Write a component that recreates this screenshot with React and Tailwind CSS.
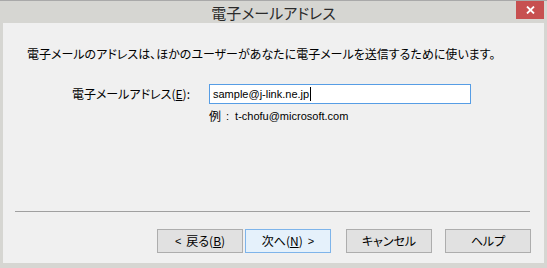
import React from "react";

const jp = { fontFamily: '"Noto Sans CJK JP", "Noto Sans", sans-serif' };
const lat = "font-['Liberation_Sans',sans-serif]";

function Btn({ children, primary, className = "" }) {
  return (
    <div
      className={
        "w-[86px] h-[24px] flex items-center justify-center text-[12px] leading-none text-black border " +
        (primary ? "bg-[#e5f1fb] border-[#7eb4ea] " : "bg-[#e1e1e1] border-[#adadad] ") +
        className
      }
    >
      <span className="[font-feature-settings:'palt'] flex items-center">{children}</span>
    </div>
  );
}

export default function App() {
  return (
    <div className="w-[547px] h-[268px] bg-[#d6d6d2] border-t border-[#a9a9a9] flex flex-col overflow-hidden" style={jp}>
      <div className="h-[22px] grid grid-cols-[31px_1fr_31px] shrink-0">
        <div />
        <div className="flex items-center justify-center text-[15px] text-[#2b2b2b] [font-feature-settings:'palt'] leading-none pt-[1px]">
          電子メールアドレス
        </div>
        <div>
          <div className="w-[28px] h-[18px] bg-[#c75050] flex items-center justify-center">
            <svg width="9" height="8" viewBox="0 0 9 8">
              <path d="M1 0.5 L8 7.5 M8 0.5 L1 7.5" stroke="white" strokeWidth="1.8" />
            </svg>
          </div>
        </div>
      </div>
      <div className="ml-[3px] w-[541px] h-[240px] bg-[#f0f0f0] flex flex-col shrink-0">
        <div className="mt-[23px] pl-[24px] text-[12px] leading-[16px] text-black [font-feature-settings:'palt'] whitespace-nowrap">
          電子メールのアドレスは、ほかのユーザーがあなたに電子メールを送信するために使います。
        </div>
        <div className="mt-[22px] flex items-center">
          <div className="w-[187px] text-right text-[12px] leading-[16px] text-black [font-feature-settings:'palt'] whitespace-nowrap">
            電子メールアドレス(<span className="underline">E</span>):
          </div>
          <div className={"ml-[19px] w-[262px] h-[20px] bg-white border border-[#569de5] flex items-center pl-[3px] text-[11px] text-black leading-none " + lat}>
            <span>sample@j-link.ne.jp</span>
            <span className="w-px h-[14px] bg-black ml-[1px]" />
          </div>
        </div>
        <div className="mt-[4px] pl-[206px] text-[12px] leading-[16px] text-black whitespace-nowrap flex items-center">
          <span>例</span>
          <span className={"ml-[5px] text-[11px] " + lat}>:</span>
          <span className={"ml-[6px] text-[11px] " + lat}>t-chofu@microsoft.com</span>
        </div>
        <div className="mt-[87px] ml-[12px] w-[515px] h-px bg-[#a0a0a0]" />
        <div className="mt-[17px] ml-[154px] flex">
          <Btn>
            <span className={"text-[11px] mr-[5px] " + lat}>&lt;</span>戻る(<span className="underline">B</span>)
          </Btn>
          <Btn primary className="ml-[2px]">
            次へ(<span className="underline">N</span>)<span className={"text-[11px] ml-[5px] " + lat}>&gt;</span>
          </Btn>
          <Btn className="ml-[15px]">キャンセル</Btn>
          <Btn className="ml-[13px]">ヘルプ</Btn>
        </div>
      </div>
    </div>
  );
}
